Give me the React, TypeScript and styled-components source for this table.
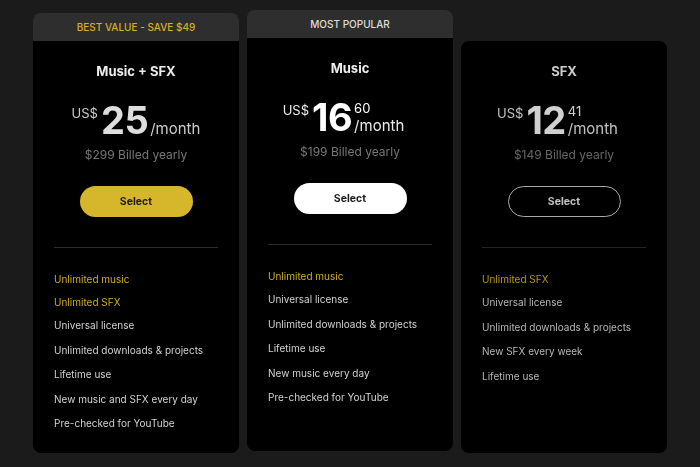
import styled, { createGlobalStyle } from "styled-components";

const GlobalStyle = createGlobalStyle`
  body {
    margin: 0;
    background: #1b1b1b;
    font-family: Inter, "Liberation Sans", sans-serif;
    -webkit-font-smoothing: antialiased;
  }
`;

const Page = styled.div`
  height: 467px;
  box-sizing: border-box;
  padding-bottom: 14px;
  display: flex;
  justify-content: center;
  align-items: flex-end;
  gap: 8px;
`;

const Card = styled.div<{ $lift?: boolean }>`
  width: 206px;
  display: flex;
  flex-direction: column;
  margin-bottom: ${(p) => (p.$lift ? "2px" : "0")};
`;

const Banner = styled.div<{ $gold?: boolean }>`
  height: 28px;
  display: flex;
  align-items: center;
  justify-content: center;
  background: #2e2e2e;
  border-radius: 8px 8px 0 0;
  font-size: 10px;
  font-weight: 500;
  color: ${(p) => (p.$gold ? "#d3b12a" : "#dedede")};
`;

const Body = styled.div<{ $top?: boolean; $tall?: boolean; $dim?: number }>`
  height: ${(p) => (p.$tall ? 413 : 412)}px;
  box-sizing: border-box;
  background: #000;
  border-radius: ${(p) => (p.$top ? "0 0 8px 8px" : "8px")};
  padding: 21px 21px 0;
  filter: brightness(${(p) => p.$dim ?? 1});
`;

const Title = styled.h2`
  margin: 0;
  font-size: 13px;
  line-height: 18px;
  font-weight: 700;
  text-align: center;
  color: #ececec;
`;

const PriceRow = styled.div<{ $ink: string }>`
  margin-top: 21px;
  display: flex;
  justify-content: center;
  align-items: flex-start;
  color: ${(p) => p.$ink};
`;

const Currency = styled.span`
  font-size: 13px;
  line-height: 13px;
  margin: 6px 3px 0 0;
  opacity: 0.92;
`;

const Amount = styled.span`
  font-size: 38px;
  line-height: 38px;
  font-weight: 700;
  letter-spacing: -0.5px;
`;

const Side = styled.div<{ $cents?: boolean }>`
  height: 38px;
  margin-left: 2px;
  margin-right: ${(p) => (p.$cents ? "13px" : "0")};
  padding-bottom: 3px;
  box-sizing: border-box;
  display: flex;
  flex-direction: column;
  justify-content: space-between;
  align-items: flex-start;
`;

const Cents = styled.span`
  font-size: 13px;
  line-height: 13px;
  margin-top: 4px;
`;

const Per = styled.span`
  margin-top: auto;
  font-size: 15px;
  line-height: 15px;
  opacity: 0.92;
`;

const Billed = styled.div`
  margin-top: 8px;
  font-size: 12px;
  line-height: 16px;
  text-align: center;
  color: #777;
`;

const SelectButton = styled.button<{ $variant: "gold" | "light" | "outline" }>`
  display: block;
  margin: 23px auto 0;
  width: 113px;
  height: 31px;
  border-radius: 16px;
  font-family: inherit;
  font-size: 10.5px;
  font-weight: 700;
  cursor: pointer;
  background: ${(p) =>
    p.$variant === "gold" ? "#d6b62b" : p.$variant === "light" ? "#fff" : "transparent"};
  color: ${(p) => (p.$variant === "outline" ? "#e0e0e0" : "#1a1a1a")};
  border: ${(p) => (p.$variant === "outline" ? "1.5px solid #c4c4c4" : "none")};
`;

const Divider = styled.hr`
  margin: 30px 0 0;
  border: none;
  border-top: 1px solid #2a2a2a;
`;

const Features = styled.ul`
  list-style: none;
  margin: 24px 0 0;
  padding: 0;
`;

const Feature = styled.li<{ $hl?: boolean }>`
  height: ${(p) => (p.$hl ? 23 : 24.5)}px;
  font-size: 10px;
  line-height: 14px;
  color: ${(p) => (p.$hl ? "#cfac1d" : "#d2d2d2")};
`;

type Plan = {
  banner?: string;
  gold?: boolean;
  title: string;
  amount: string;
  cents?: string;
  billed: string;
  button: "gold" | "light" | "outline";
  dim: number;
  ink: string;
  highlights: string[];
  features: string[];
};

const plans: Plan[] = [
  {
    banner: "BEST VALUE - SAVE $49",
    gold: true,
    title: "Music + SFX",
    amount: "25",
    billed: "$299 Billed yearly",
    button: "gold",
    dim: 1,
    ink: "#dedede",
    highlights: ["Unlimited music", "Unlimited SFX"],
    features: [
      "Universal license",
      "Unlimited downloads & projects",
      "Lifetime use",
      "New music and SFX every day",
      "Pre-checked for YouTube",
    ],
  },
  {
    banner: "MOST POPULAR",
    title: "Music",
    amount: "16",
    cents: "60",
    billed: "$199 Billed yearly",
    button: "light",
    dim: 1,
    ink: "#ffffff",
    highlights: ["Unlimited music"],
    features: [
      "Universal license",
      "Unlimited downloads & projects",
      "Lifetime use",
      "New music every day",
      "Pre-checked for YouTube",
    ],
  },
  {
    title: "SFX",
    amount: "12",
    cents: "41",
    billed: "$149 Billed yearly",
    button: "outline",
    dim: 0.86,
    ink: "#f2f2f2",
    highlights: ["Unlimited SFX"],
    features: [
      "Universal license",
      "Unlimited downloads & projects",
      "New SFX every week",
      "Lifetime use",
    ],
  },
];

export default function App() {
  return (
    <>
      <GlobalStyle />
      <Page>
        {plans.map((plan) => (
          <Card key={plan.title} $lift={plan.button === "light"}>
            {plan.banner && <Banner $gold={plan.gold}>{plan.banner}</Banner>}
            <Body $top={!!plan.banner} $tall={plan.button === "light"} $dim={plan.dim}>
              <Title>{plan.title}</Title>
              <PriceRow $ink={plan.ink}>
                <Currency>US$</Currency>
                <Amount>{plan.amount}</Amount>
                <Side $cents={!!plan.cents}>
                  {plan.cents && <Cents>{plan.cents}</Cents>}
                  <Per>/month</Per>
                </Side>
              </PriceRow>
              <Billed>{plan.billed}</Billed>
              <SelectButton $variant={plan.button}>Select</SelectButton>
              <Divider />
              <Features>
                {plan.highlights.map((f) => (
                  <Feature key={f} $hl>
                    {f}
                  </Feature>
                ))}
                {plan.features.map((f) => (
                  <Feature key={f}>{f}</Feature>
                ))}
              </Features>
            </Body>
          </Card>
        ))}
      </Page>
    </>
  );
}
